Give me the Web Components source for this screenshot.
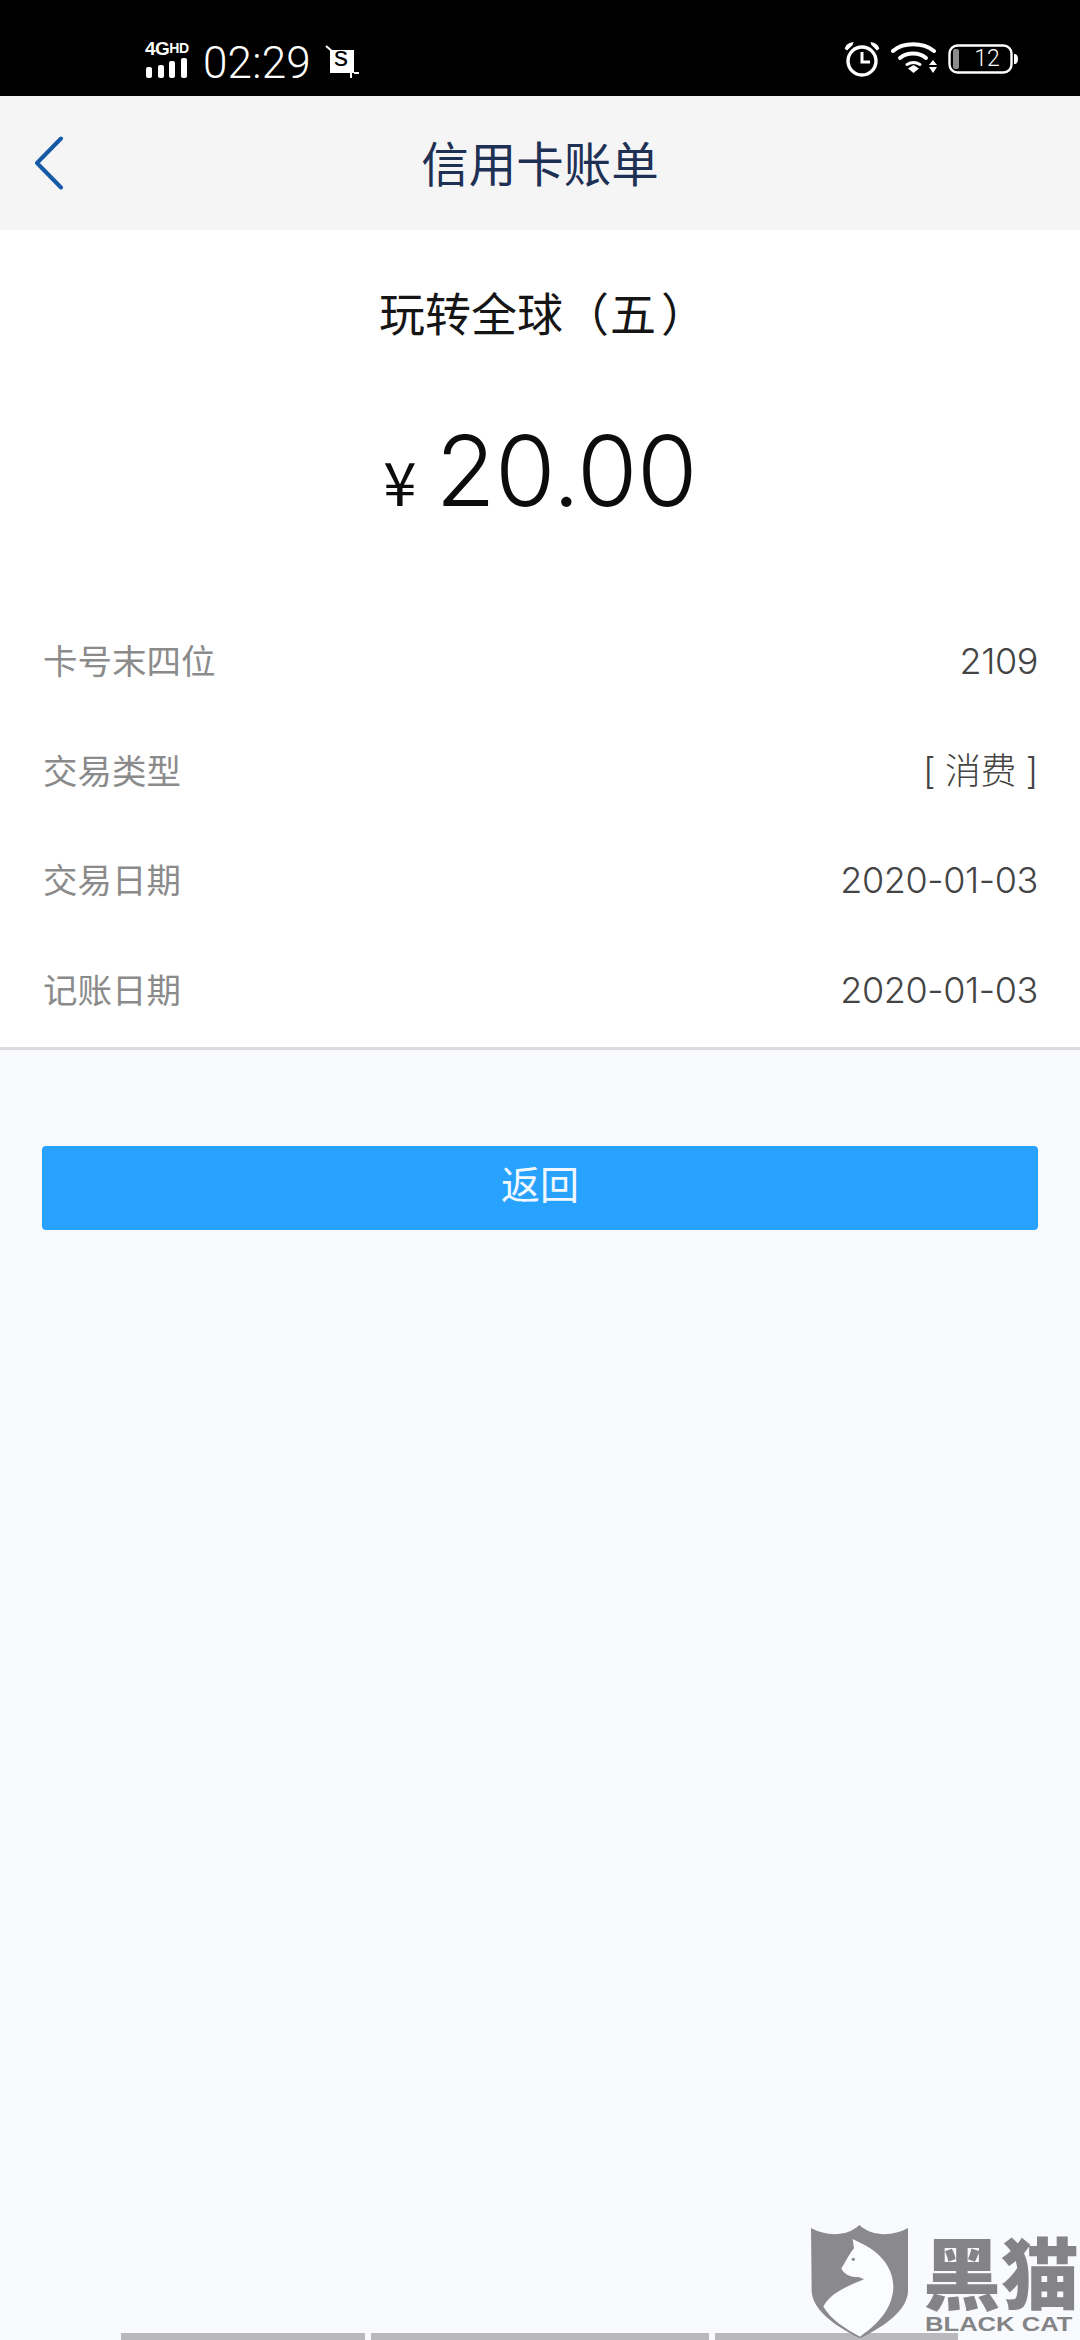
<!DOCTYPE html>
<html lang="zh">
<head>
<meta charset="utf-8">
<title>信用卡账单</title>
<style>
	html, body { margin: 0; padding: 0; background: #f9fafe; }
	body { width: 1080px; height: 2340px; overflow: hidden; font-family: 'Inter', 'Noto Sans CJK SC', sans-serif; }
	bill-page { height: 2340px; }
</style>
</head>
<body>
<bill-page>
	<status-bar slot="top"></status-bar>
	<nav-header slot="top">信用卡账单</nav-header>
	<bill-card slot="top" amount="20.00">
		<span slot="name">玩转全球（<span style="margin: 0 5px 0 1px">五</span>）</span>
		<detail-row label="卡号末四位">2109</detail-row>
		<detail-row label="交易类型">[ 消费 ]</detail-row>
		<detail-row label="交易日期">2020-01-03</detail-row>
		<detail-row label="记账日期">2020-01-03</detail-row>
	</bill-card>
	<primary-button slot="top">返回</primary-button>
	<gesture-bar slot="bottom"></gesture-bar>
	<black-cat-mark slot="over"></black-cat-mark>
</bill-page>

<script>
	const CJK = `'Noto Sans CJK SC', sans-serif`;

	class BillPage extends HTMLElement {
		constructor() {
			super();
			this.attachShadow({ mode: 'open' });
			this.shadowRoot.innerHTML = `
				<style>
					:host { display: flex; flex-direction: column; position: relative; width: 1080px; background: #f9fafe; overflow: hidden; }
					.grow { flex: 1; display: flex; flex-direction: column; }
				</style>
				<div class="grow"><slot name="top"></slot></div>
				<slot name="bottom"></slot>
				<slot name="over"></slot>
			`;
		}
	}

	class StatusBar extends HTMLElement {
		constructor() {
			super();
			this.attachShadow({ mode: 'open' });
			this.shadowRoot.innerHTML = `
				<style>
					:host { display: flex; align-items: flex-start; justify-content: space-between; height: 96px; background: #000; color: #fff; box-sizing: border-box; padding: 38px 60px 0 145px; }
					.left, .right { display: flex; align-items: flex-start; }
					.net { display: flex; flex-direction: column; width: 44px; margin-top: 1px; }
					.net b { font: 700 19px/18px 'Liberation Sans', sans-serif; letter-spacing: -0.6px; white-space: nowrap; }
					.net b small { font-size: 14px; letter-spacing: -0.2px; vertical-align: 2px; }
					.time { font: 300 44px/50px 'Roboto', sans-serif; margin-left: 14px; letter-spacing: 0.2px; }
					.shot { margin: 7px 0 0 14px; position: relative; width: 34px; height: 34px; }
					.shot span { position: absolute; left: 9px; top: -2px; font: 400 28px/28px 'Liberation Sans', sans-serif; color: #000; }
					svg { display: block; }
					.clock { margin-top: 3px; }
					.wifi { margin: 3px 0 0 11px; }
					.battery { position: relative; width: 72px; height: 30px; margin: 6px 0 0 11px; }
					.battery span { position: absolute; left: 21px; top: 0; width: 36px; text-align: center; font: 300 23px/30px 'Roboto', sans-serif; }
				</style>
				<div class="left">
					<div class="net">
						<b>4G<small>HD</small></b>
						<svg width="44" height="21" viewBox="0 0 44 21" fill="#fff">
							<rect x="1" y="9" width="6" height="11" rx="2"/>
							<rect x="13" y="7" width="6" height="13" rx="2"/>
							<rect x="24" y="3" width="6" height="17" rx="2"/>
							<rect x="36" y="0" width="6" height="20" rx="2"/>
						</svg>
					</div>
					<div class="time">02:29</div>
					<div class="shot">
						<svg width="34" height="34" viewBox="0 0 34 34">
							<path d="M1 1l7 6" stroke="#fff" stroke-width="2"/>
							<rect x="5" y="5" width="24" height="23" fill="#fff"/>
							<path d="M26 28v5M29 28h5" stroke="#fff" stroke-width="2"/>
						</svg>
						<span>s</span>
					</div>
				</div>
				<div class="right">
					<svg class="clock" width="36" height="36" viewBox="0 0 36 36" fill="none" stroke="#fff">
						<circle cx="18" cy="20" r="14" stroke-width="3.4"/>
						<path d="M18 11v10h8" stroke-width="3"/>
						<path d="M1.5 7.5c1-3.500 4-5 7-5.500l-.5 1.500-5 5z" fill="#fff" stroke-width="1.400"/>
						<path d="M34.500 7.500c-1-3.500-4-5-7-5.500l.5 1.500 5 5z" fill="#fff" stroke-width="1.400"/>
					</svg>
					<svg class="wifi" width="46" height="34" viewBox="0 0 46 34" fill="none" stroke="#fff" stroke-width="4" stroke-linecap="round">
						<path d="M2 10C12 1 32 1 43 10"/>
						<path d="M9 17c7-6 19-6 26 0"/>
						<path d="M16 23.500c4-2.500 9-2.500 13 0" stroke-width="3"/>
						<path d="M17 27.500l5.500-3.500 5.500 3.500-5.500 4.500z" fill="#fff" stroke="none"/>
						<path d="M38 24l4-5 4 5zM38 26h8l-4 6z" fill="#fff" stroke="none"/>
					</svg>
					<div class="battery">
						<svg width="72" height="30" viewBox="0 0 72 30" fill="none">
							<rect x="1.500" y="1.500" width="62" height="27" rx="8" stroke="#fff" stroke-width="2.400"/>
							<rect x="5" y="5" width="6" height="20" rx="2" fill="#8c8c8c"/>
							<path d="M66 10c3 0 4 2 4 5s-1 5-4 5z" fill="#fff"/>
						</svg>
						<span>12</span>
					</div>
				</div>
			`;
		}
	}

	class NavHeader extends HTMLElement {
		constructor() {
			super();
			this.attachShadow({ mode: 'open' });
			this.shadowRoot.innerHTML = `
				<style>
					:host { display: grid; grid-template-columns: 120px 1fr 120px; align-items: center; height: 134px; background: #f5f5f5; }
					svg { display: block; margin-left: 33px; }
					h1 { margin: -3px 0 0; text-align: center; font: 400 47.500px/60px ${CJK}; color: #1e3054; }
				</style>
				<svg width="32" height="54" viewBox="0 0 32 54" fill="none">
					<path d="M28 2.500L4 27l24 24.500" stroke="#155aa6" stroke-width="4" stroke-linecap="round" stroke-linejoin="round"/>
				</svg>
				<h1><slot></slot></h1>
				<span></span>
			`;
		}
	}

	class BillCard extends HTMLElement {
		constructor() {
			super();
			this.attachShadow({ mode: 'open' });
			this.shadowRoot.innerHTML = `
				<style>
					:host { display: block; background: #fff; border-bottom: 3px solid #dcdcde; height: 820px; box-sizing: border-box; }
					.name { text-align: center; font: 400 46px/60px ${CJK}; color: #151515; padding: 51px 0 0 6px; height: 60px; margin-bottom: 1px; }
					.amount { display: flex; justify-content: center; align-items: baseline; margin-top: 70px; height: 120px; color: #0c0c0c; }
					.yen { font: 400 60px/120px ${CJK}; margin-right: 19px; }
					.num { font: 300 98px/120px 'Inter', sans-serif; letter-spacing: -0.6px; }
					.rows { margin-top: 74px; display: flex; flex-direction: column; }
				</style>
				<div class="name"><slot name="name"></slot></div>
				<div class="amount"><span class="yen">¥</span><span class="num"></span></div>
				<div class="rows"><slot></slot></div>
			`;
		}
		connectedCallback() {
			this.shadowRoot.querySelector('.num').textContent = this.getAttribute('amount');
		}
	}

	class DetailRow extends HTMLElement {
		constructor() {
			super();
			this.attachShadow({ mode: 'open' });
			this.shadowRoot.innerHTML = `
				<style>
					:host { display: flex; justify-content: space-between; align-items: baseline; height: 109.500px; padding: 0 42px 0 43px; line-height: 109.500px; }
					.label { font: 400 34.500px/109.500px ${CJK}; color: #8b8b8b; }
					.value { font: 300 36px/109.500px 'Inter', 'Noto Sans CJK SC', sans-serif; letter-spacing: -0.4px; color: #444; }
				</style>
				<span class="label"></span>
				<span class="value"><slot></slot></span>
			`;
		}
		connectedCallback() {
			this.shadowRoot.querySelector('.label').textContent = this.getAttribute('label');
		}
	}

	class PrimaryButton extends HTMLElement {
		constructor() {
			super();
			this.attachShadow({ mode: 'open' });
			this.shadowRoot.innerHTML = `
				<style>
					:host { display: block; padding: 96px 42px 0; }
					button { display: block; width: 100%; height: 84px; border: 0; border-radius: 4px; background: #28a2ff; color: #f1f8ff; font: 400 39px/72px ${CJK}; padding: 0 0 12px; }
				</style>
				<button><slot></slot></button>
			`;
		}
	}

	class GestureBar extends HTMLElement {
		constructor() {
			super();
			this.attachShadow({ mode: 'open' });
			this.shadowRoot.innerHTML = `
				<style>
					:host { display: flex; gap: 6px; height: 7px; padding-left: 121px; }
					i { display: block; height: 7px; background: #b9b9bd; }
				</style>
				<i style="width:244px"></i><i style="width:338px"></i><i style="width:243px"></i>
			`;
		}
	}

	class BlackCatMark extends HTMLElement {
		constructor() {
			super();
			this.attachShadow({ mode: 'open' });
			this.shadowRoot.innerHTML = `
				<style>
					:host { position: absolute; left: 760px; top: 2200px; width: 320px; height: 140px; color: #848486; overflow: hidden; }
					svg { position: absolute; left: 0; top: 0; }
					.cn { position: absolute; left: 163px; top: 34px; width: 157px; font: 900 78px/72px ${CJK}; white-space: nowrap; }
					.en { position: absolute; left: 165px; top: 114px; font: 700 20px/20px 'Liberation Sans', sans-serif; white-space: nowrap; transform: scaleX(1.28); transform-origin: 0 0; }
				</style>
				<svg width="320" height="140" viewBox="0 0 960 420">
					<path d="M153 84C200 110 262 110 298 75C336 110 398 110 444 84V275C440 330 380 375 300 415C220 375 160 330 155 275Z" fill="#8a8a8c"/>
					<path d="M278 117L300 128C372 160 402 215 400 265C396 330 350 375 300 410C255 385 215 360 190 320C210 280 255 262 312 238L298 232C270 232 250 222 244 205C255 190 262 170 282 145Z" fill="#fbfcfe"/>
					<circle cx="280" cy="178" r="5" fill="#8a8a8c"/>
				</svg>
				<span class="cn">黑猫</span>
				<span class="en">BLACK CAT</span>
			`;
		}
	}

	customElements.define('bill-page', BillPage);
	customElements.define('status-bar', StatusBar);
	customElements.define('nav-header', NavHeader);
	customElements.define('bill-card', BillCard);
	customElements.define('detail-row', DetailRow);
	customElements.define('primary-button', PrimaryButton);
	customElements.define('gesture-bar', GestureBar);
	customElements.define('black-cat-mark', BlackCatMark);
</script>
</body>
</html>
